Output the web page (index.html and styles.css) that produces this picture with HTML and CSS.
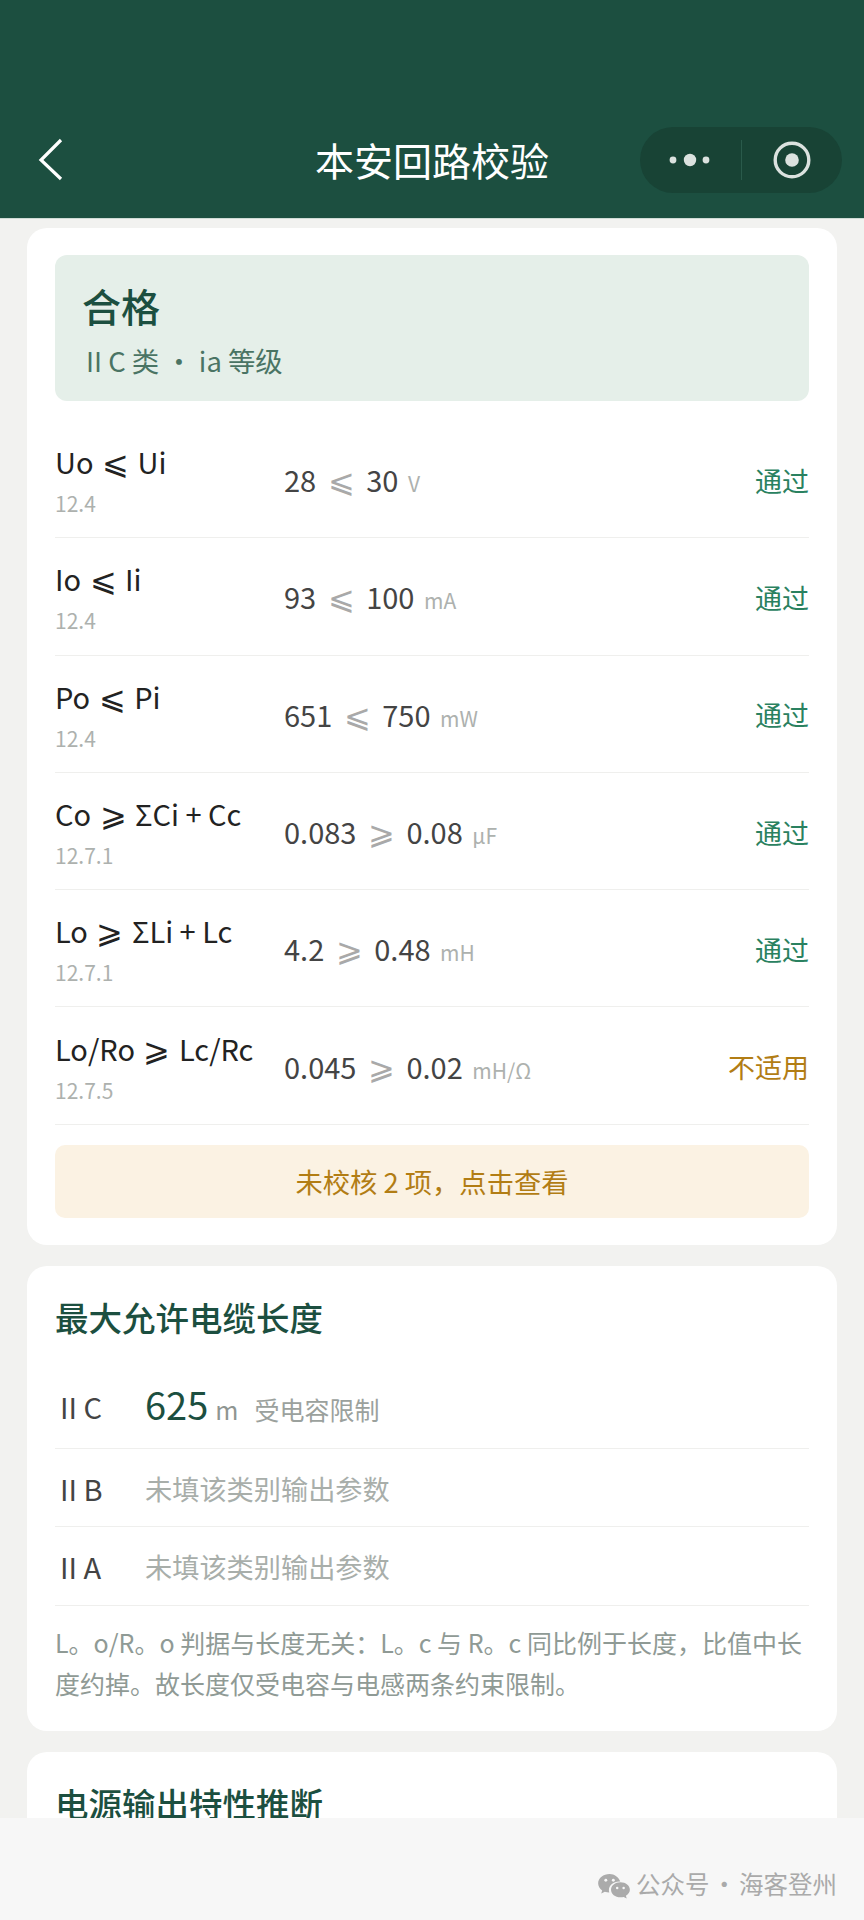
FILE: index.html
```html
<!DOCTYPE html>
<html lang="zh-CN">
<head>
<meta charset="utf-8">
<title>本安回路校验</title>
<link rel="stylesheet" href="styles.css">
</head>
<body>
<div class="page">
  <header class="nav">
    <div class="nav-left">
      <svg class="back" width="26" height="44" viewBox="0 0 26 44"><polyline points="23,2 3,22 23,41" fill="none" stroke="#fff" stroke-width="3.2"/></svg>
    </div>
    <h1 class="nav-title">本安回路校验</h1>
    <div class="nav-right">
      <div class="capsule">
        <div class="cap-part">
          <svg width="44" height="16" viewBox="0 0 44 16"><circle cx="5" cy="8" r="3.4" fill="#dbe2df"/><circle cx="22" cy="8" r="6.2" fill="#dbe2df"/><circle cx="38" cy="8" r="3.4" fill="#dbe2df"/></svg>
        </div>
        <div class="cap-divider"></div>
        <div class="cap-part">
          <svg width="38" height="38" viewBox="0 0 38 38"><circle cx="19" cy="19" r="16.8" fill="none" stroke="#dbe2df" stroke-width="3.4"/><circle cx="19" cy="19" r="6.8" fill="#dbe2df"/></svg>
        </div>
      </div>
    </div>
  </header>

  <main class="content">
    <section class="card card-result">
      <div class="verdict">
        <div class="verdict-title">合格</div>
        <div class="verdict-sub">II C 类 · ia 等级</div>
      </div>
      <div class="checks">
        <div class="check">
          <div class="check-name"><div class="formula">Uo <span class="rel">⩽</span> Ui</div><div class="code">12.4</div></div>
          <div class="check-val">28 <span class="op">⩽</span> 30 <span class="unit">V</span></div>
          <div class="status pass">通过</div>
        </div>
        <div class="check">
          <div class="check-name"><div class="formula">Io <span class="rel">⩽</span> Ii</div><div class="code">12.4</div></div>
          <div class="check-val">93 <span class="op">⩽</span> 100 <span class="unit">mA</span></div>
          <div class="status pass">通过</div>
        </div>
        <div class="check">
          <div class="check-name"><div class="formula">Po <span class="rel">⩽</span> Pi</div><div class="code">12.4</div></div>
          <div class="check-val">651 <span class="op">⩽</span> 750 <span class="unit">mW</span></div>
          <div class="status pass">通过</div>
        </div>
        <div class="check">
          <div class="check-name"><div class="formula">Co <span class="rel">⩾</span> ΣCi + Cc</div><div class="code">12.7.1</div></div>
          <div class="check-val">0.083 <span class="op">⩾</span> 0.08 <span class="unit">μF</span></div>
          <div class="status pass">通过</div>
        </div>
        <div class="check">
          <div class="check-name"><div class="formula">Lo <span class="rel">⩾</span> ΣLi + Lc</div><div class="code">12.7.1</div></div>
          <div class="check-val">4.2 <span class="op">⩾</span> 0.48 <span class="unit">mH</span></div>
          <div class="status pass">通过</div>
        </div>
        <div class="check">
          <div class="check-name"><div class="formula">Lo/Ro <span class="rel">⩾</span> Lc/Rc</div><div class="code">12.7.5</div></div>
          <div class="check-val">0.045 <span class="op">⩾</span> 0.02 <span class="unit">mH/Ω</span></div>
          <div class="status na">不适用</div>
        </div>
      </div>
      <div class="pending">未校核 2 项&#xFF0C;点击查看</div>
    </section>

    <section class="card card-length">
      <h2 class="card-title">最大允许电缆长度</h2>
      <div class="len-row len-first">
        <div class="len-label">II C</div>
        <div class="len-num">625</div>
        <div class="len-unit">m</div>
        <div class="len-limit">受电容限制</div>
      </div>
      <div class="len-row">
        <div class="len-label">II B</div>
        <div class="len-empty">未填该类别输出参数</div>
      </div>
      <div class="len-row">
        <div class="len-label">II A</div>
        <div class="len-empty">未填该类别输出参数</div>
      </div>
      <p class="note">L。o/R。o 判据与长度无关&#xFF1A;L。c 与 R。c 同比例于长度&#xFF0C;比值中长度约掉。故长度仅受电容与电感两条约束限制。</p>
    </section>

    <section class="card card-third">
      <h2 class="card-title">电源输出特性推断</h2>
    </section>
  </main>

  <footer class="watermark">
    <svg class="wechat" width="32" height="25" viewBox="0 0 33 26"><path d="M12 0C5.400 0 0 4.300 0 9.700c0 3 1.600 5.600 4.200 7.400L3.200 20.400l3.800-2c1.400.5 3 .8 4.600.9-.3-.9-.4-1.700-.4-2.600 0-5 4.800-8.900 10.600-8.900h1.200C21.400 3.300 17 0 12 0z" fill="#ababab"/><path d="M33 16.400c0-4.400-4.300-7.900-9.800-7.900s-9.800 3.500-9.800 7.900 4.300 7.900 9.800 7.900c1.200 0 2.300-.2 3.400-.5l3.100 1.700-.8-2.900c2.500-1.500 4.100-3.700 4.100-6.200z" fill="#ababab"/><circle cx="8" cy="6.500" r="1.500" fill="#f7f7f7"/><circle cx="15.800" cy="6.500" r="1.500" fill="#f7f7f7"/><circle cx="19.800" cy="14.500" r="1.300" fill="#f7f7f7"/><circle cx="26.500" cy="14.500" r="1.300" fill="#f7f7f7"/></svg>
    <span class="wm-text">公众号 · 海客登州</span>
  </footer>
</div>
</body>
</html>
```
FILE: styles.css
```css
* { box-sizing: border-box; }
html, body { margin: 0; padding: 0; }
body {
  font-family: "Noto Sans CJK SC", "Noto Sans", sans-serif;
  background: #f2f2f0;
  color: #222;
}
.page {
  position: relative;
  width: 864px;
  height: 1920px;
  overflow: hidden;
}
.nav {
  height: 218px;
  background: #1c4f40;
  display: grid;
  grid-template-columns: 1fr auto 1fr;
  align-items: center;
  padding: 102px 22px 0 22px;
  box-shadow: 0 1px 0 #cfdcd6;
}
.nav-left { display: flex; align-items: center; padding-left: 16px; }
.nav-title {
  margin: -2px 0 0;
  font-size: 39px;
  font-weight: 400;
  color: #fff;
  line-height: 56px;
  white-space: nowrap;
}
.nav-right { display: flex; justify-content: flex-end; }
.capsule {
  width: 202px;
  height: 66px;
  border-radius: 33px;
  background: #184335;
  display: flex;
  align-items: center;
}
.cap-part { flex: 1; display: flex; justify-content: center; align-items: center; }
.cap-divider { width: 1px; height: 40px; background: #2a5a4b; }

.content {
  padding: 10px 27px 0;
  display: flex;
  flex-direction: column;
  gap: 21px;
}
.card {
  background: #fff;
  border-radius: 20px;
  padding: 27px 28px;
}
.verdict {
  height: 146px;
  background: #e5efe9;
  border-radius: 12px;
  padding: 22px 27px;
}
.verdict-title {
  font-size: 39px;
  font-weight: 500;
  line-height: 56px;
  color: #1c4f40;
}
.verdict-sub {
  margin: 8px 0 0 4px;
  font-size: 27.4px;
  line-height: 38px;
  color: #4a7464;
}
.checks { margin-top: 20px; }
.check {
  height: 117.3px;
  display: grid;
  grid-template-columns: 229px 1fr auto;
  align-items: center;
  border-bottom: 1.5px solid #efefed;
}
.formula {
  font-size: 29px;
  line-height: 42px;
  color: #222;
  white-space: nowrap;
}
.rel { font-size: 32px; line-height: 1; margin: 0 2px; }
.code {
  font-size: 21px;
  line-height: 30px;
  margin-top: 6px;
  color: #adb1ae;
}
.check-val {
  font-size: 29px;
  line-height: 42px;
  color: #444;
  white-space: nowrap;
  padding-top: 4px;
}
.op { font-size: 32px; line-height: 1; color: #a9a9a9; margin: 0 5px; }
.unit { font-size: 21px; color: #adb1ae; margin-left: 3px; }
.status { font-size: 27px; line-height: 42px; padding-top: 3px; }
.pass { color: #2a8160; }
.na { color: #b27d14; }
.pending {
  margin-top: 20px;
  height: 73px;
  background: #fbf2e3;
  border-radius: 10px;
  display: flex;
  align-items: center;
  justify-content: center;
  font-size: 27.3px;
  color: #b27d14;
}
.card-title {
  margin: 0;
  font-size: 33.5px;
  font-weight: 500;
  line-height: 48px;
  color: #1c4f40;
}
.card-length { padding-top: 27px; padding-bottom: 27px; }
.len-row {
  height: 78.5px;
  display: flex;
  align-items: center;
  padding-left: 5px;
  border-bottom: 1.5px solid #efefed;
}
.len-first { height: 108px; padding-top: 26px; }
.len-label {
  width: 85px;
  font-size: 29px;
  color: #444;
}
.len-first .len-label { margin-top: -2px; }
.len-num { font-size: 38px; line-height: 50px; color: #1c4f40; margin-top: -6px; }
.len-unit { font-size: 25px; color: #8f9692; margin: 4px 0 0 7px; }
.len-limit { font-size: 25px; color: #9ba19d; margin: 3px 0 0 16px; }
.len-empty { font-size: 27.2px; color: #a8aeaa; }
.note {
  margin: 16px 0 0;
  font-size: 25px;
  line-height: 41px;
  color: #8f9a95;
}
.card-third { height: 200px; padding-top: 27px; }
.watermark {
  position: absolute;
  left: 0;
  right: 0;
  bottom: 0;
  height: 102px;
  background: #f7f7f7;
  display: flex;
  align-items: center;
  justify-content: flex-end;
  gap: 6px;
  padding: 29px 27px 0 0;
}
.wechat { margin-top: 6px; }
.wm-text { font-size: 24.5px; word-spacing: -3px; color: #aaa; white-space: nowrap; }
```
